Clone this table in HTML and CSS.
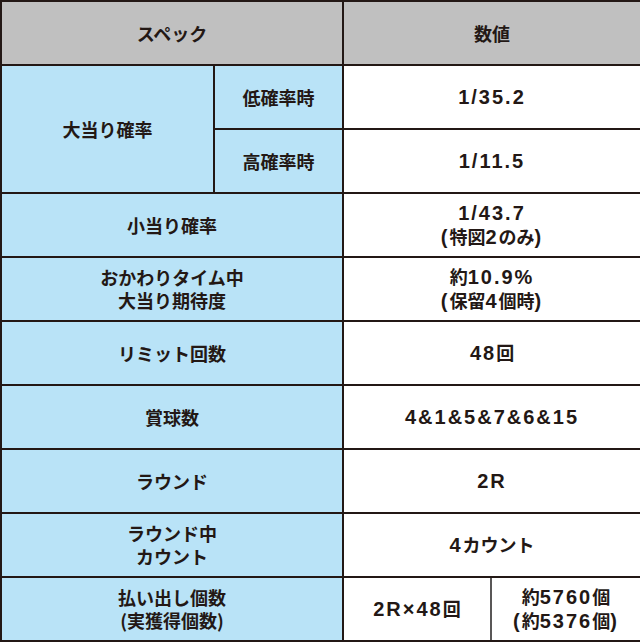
FILE: index.html
```html
<!DOCTYPE html>
<html lang="ja">
<head>
<meta charset="utf-8">
<link rel="stylesheet" href="styles.css">
</head>
<body>
<table class="spec">
  <colgroup>
    <col class="c1"><col class="c2"><col class="c3"><col class="c4">
  </colgroup>
  <tr class="head">
    <th colspan="2">スペック</th>
    <th colspan="2">数値</th>
  </tr>
  <tr>
    <th rowspan="2">大当り確率</th>
    <th class="sub">低確率時</th>
    <td colspan="2"><span class="num">1/35.2</span></td>
  </tr>
  <tr>
    <th class="sub">高確率時</th>
    <td colspan="2"><span class="num">1/11.5</span></td>
  </tr>
  <tr>
    <th colspan="2">小当り確率</th>
    <td colspan="2"><span class="num">1/43.7</span><br><span class="num">(</span>特図<span class="num">2</span>のみ<span class="num">)</span></td>
  </tr>
  <tr>
    <th colspan="2">おかわりタイム中<br>大当り期待度</th>
    <td colspan="2">約<span class="num">10.9%</span><br><span class="num">(</span>保留<span class="num">4</span>個時<span class="num">)</span></td>
  </tr>
  <tr>
    <th colspan="2">リミット回数</th>
    <td colspan="2"><span class="num">48</span>回</td>
  </tr>
  <tr>
    <th colspan="2">賞球数</th>
    <td colspan="2"><span class="num">4&amp;1&amp;5&amp;7&amp;6&amp;15</span></td>
  </tr>
  <tr>
    <th colspan="2">ラウンド</th>
    <td colspan="2"><span class="num">2R</span></td>
  </tr>
  <tr>
    <th colspan="2">ラウンド中<br>カウント</th>
    <td colspan="2"><span class="num">4</span>カウント</td>
  </tr>
  <tr>
    <th colspan="2">払い出し個数<br>(実獲得個数)</th>
    <td class="split"><span class="num">2R×48</span>回</td>
    <td>約<span class="num">5760</span>個<br><span class="num">(</span>約<span class="num">5376</span>個<span class="num">)</span></td>
  </tr>
</table>
</body>
</html>
```
FILE: styles.css
```css
html, body {
  margin: 0;
  padding: 0;
  background: #ffffff;
}
.spec {
  width: 640px;
  table-layout: fixed;
  border-collapse: collapse;
  font-family: "Noto Sans CJK JP", "Noto Sans", sans-serif;
  font-weight: 700;
  font-size: 18px;
  line-height: 23px;
  color: #231815;
}
.c1 { width: 213px; }
.c2 { width: 129px; }
.c3 { width: 148px; }
.c4 { width: 150px; }
.spec th, .spec td {
  border: 2px solid #231815;
  height: 62px;
  padding: 0;
  text-align: center;
  vertical-align: middle;
  font-weight: 700;
}
.spec th {
  background: #b9e3f7;
}
.spec tr + tr th, .spec tr + tr td {
  border-top-color: #595757;
}
.spec .head th {
  background: #c0c0c0;
}
.spec td {
  background: #ffffff;
}
.spec td.split {
  border-right-color: #595757;
}
.num {
  font-family: "Liberation Sans", Arial, sans-serif;
  font-size: 20px;
  letter-spacing: 2px;
}
```
